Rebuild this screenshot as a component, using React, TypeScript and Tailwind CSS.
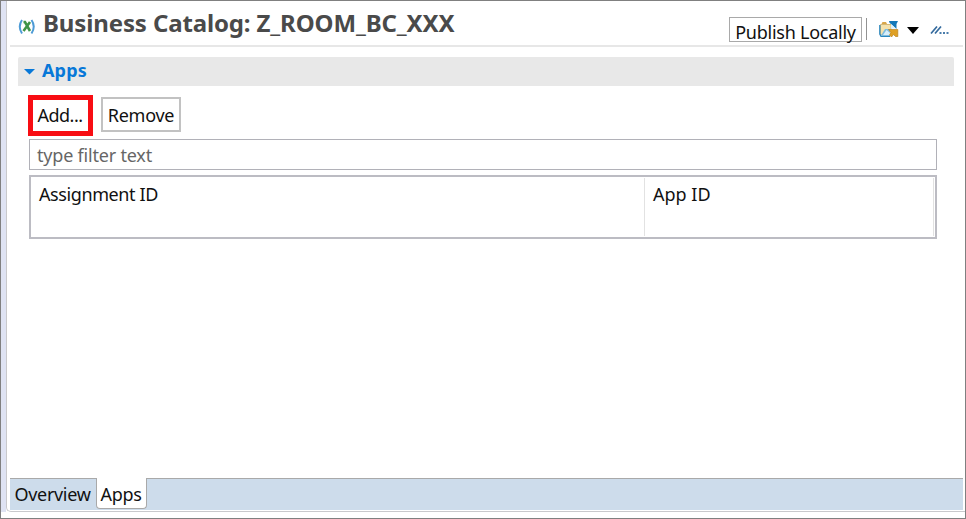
import React from 'react';

function VariableIcon() {
  return (
    <svg width="18" height="18" viewBox="0 0 18 18" fill="none">
      <path d="M4 3Q-.5 9.500 4 16.500M13.500 3Q18 9.500 13.500 16.500" stroke="#4d9bd6" strokeWidth="2" />
      <path d="M5.500 5H7L12 14M12 5L5.500 14" stroke="#3f9447" strokeWidth="2.600" />
    </svg>
  );
}

function FolderIcon() {
  return (
    <svg width="20" height="18" viewBox="0 0 20 18">
      <path d="M1.500 15V4.500H12V15Z" fill="#f5e2ac" stroke="#d3b878" strokeWidth="1" />
      <path d="M2.500 4L3.500 2H7L8 4Z" fill="#d9a648" />
      <path d="M.8 5V14L2 16.300H11" fill="none" stroke="#2b87bd" strokeWidth="1.300" />
      <path d="M2 15.500L6 9H11V16H2Z" fill="#7dbce0" />
      <path d="M4 15L7.500 10L11 13V15Z" fill="#d8eef9" />
      <path d="M10 1H19L17.500 4V9L10.500 2.800Z" fill="#1478b8" />
      <path d="M12 4L17 8.500H12Z" fill="#d8eef9" />
      <path d="M9.500 9.500H18.800V16.500H16.500L14.500 14.500L12.500 17L10.500 15L12 12.500Z" fill="#dfa024" stroke="#b98320" strokeWidth=".7" />
    </svg>
  );
}

function Header() {
  return (
    <header className="ml-[3px] mr-[2px] flex h-[46px] shrink-0 border-b-2 border-[#e7e7e7]">
      <div className="ml-[8px] mt-[16px] h-[18px] w-[18px] shrink-0"><VariableIcon /></div>
      <h1 className="ml-[7px] mt-[5px] w-[686px] text-[24px] leading-[34px] font-bold tracking-[-0.13px] text-[#4a4a4a]">
        Business Catalog: Z_ROOM_BC_XXX
      </h1>
      <button className="mt-[16px] flex h-[25px] w-[133px] shrink-0 items-center justify-center border border-[#a9a9a9] pt-[5px] leading-[24px] tracking-[-0.25px] whitespace-nowrap">
        Publish Locally
      </button>
      <div className="ml-[4px] mt-[17px] h-[22px] w-px shrink-0 bg-[#929292]" />
      <div className="ml-[12px] mt-[19px] h-[18px] w-[20px] shrink-0"><FolderIcon /></div>
      <svg className="ml-[8px] mt-[26px] shrink-0" width="12" height="7" viewBox="0 0 12 7"><path d="M0 0H12L6 7Z" fill="#000" /></svg>
      <svg className="ml-[11px] mt-[23px] shrink-0" width="20" height="12" viewBox="0 0 20 12">
        <path d="M1 9.500L7 2.500M5 9.500L11 2.500" stroke="#356b9e" strokeWidth="1.700" />
        <path d="M9.500 8h2v2h-2zM13 8h2v2h-2zM16.500 8h2v2h-2z" fill="#4a7dab" />
      </svg>
    </header>
  );
}

export default function App() {
  return (
    <div className="flex h-[519px] w-[966px] flex-col overflow-hidden border border-[#808080] bg-white font-['Noto_Sans','Open_Sans',sans-serif] text-[18px] text-[#111]">
      <div className="flex h-[511px] shrink-0">
        <div className="w-[5px] shrink-0 bg-[#dfe3f3]" />
        <main className="flex min-w-0 flex-1 flex-col rounded-bl-[5px] border-b border-l border-[#c9c9cc]">
          <Header />
          <section className="mr-[11px] ml-[11px] mt-[10px] flex h-[29px] shrink-0 items-center rounded-t-[2px] bg-[#e8e8e8]">
            <svg className="ml-[6px]" width="11" height="6" viewBox="0 0 11 6"><path d="M0 0H11L5.500 5.500Z" fill="#0878d8" /></svg>
            <h2 className="ml-[7px] pb-[2px] text-[18px] leading-[27px] font-bold tracking-[0.15px] text-[#0878d8]">Apps</h2>
          </section>
          <div className="ml-[21px] mt-[9px] flex h-[41px] shrink-0 items-center gap-[8px]">
            <button className="h-[41px] w-[65px] border-5 border-[#f80d13] pr-px leading-[29px] tracking-[-0.5px]">Add...</button>
            <button className="mb-[2px] h-[35px] w-[80px] border-2 border-[#c2c2c2] pt-px leading-[30px] tracking-[-0.25px]">Remove</button>
          </div>
          <div className="ml-[22px] mt-[3px] flex h-[31px] w-[908px] shrink-0 items-center border border-[#b1b1b8] pt-px pl-[7px] tracking-[-0.2px] text-[#666]">type filter text</div>
          <div className="ml-[22px] mt-[5px] flex h-[64px] w-[908px] shrink-0 border-2 border-[#bcbcc3] py-px leading-[33px]">
            <div className="w-[614px] border-r border-[#e2e2e2] pl-[8px] tracking-[-0.4px]">Assignment ID</div>
            <div className="w-[289px] border-r border-[#e2e2e2] pl-[8px]">App ID</div>
          </div>
          <nav className="mt-auto mb-px ml-[3px] mr-[2px] flex h-[32px] shrink-0 bg-[#cddceb] leading-[30px] tracking-[-0.3px]">
            <div className="h-[31px] w-[86px] border-t border-[#a9a9a9] pr-px text-center">Overview</div>
            <div className="h-[31px] w-[51px] rounded-b-[4px] border-x border-b border-[#a9a9a9] bg-white pt-px pr-px text-center">Apps</div>
            <div className="flex-1 border-t border-[#a9a9a9]" />
          </nav>
        </main>
      </div>
    </div>
  );
}
